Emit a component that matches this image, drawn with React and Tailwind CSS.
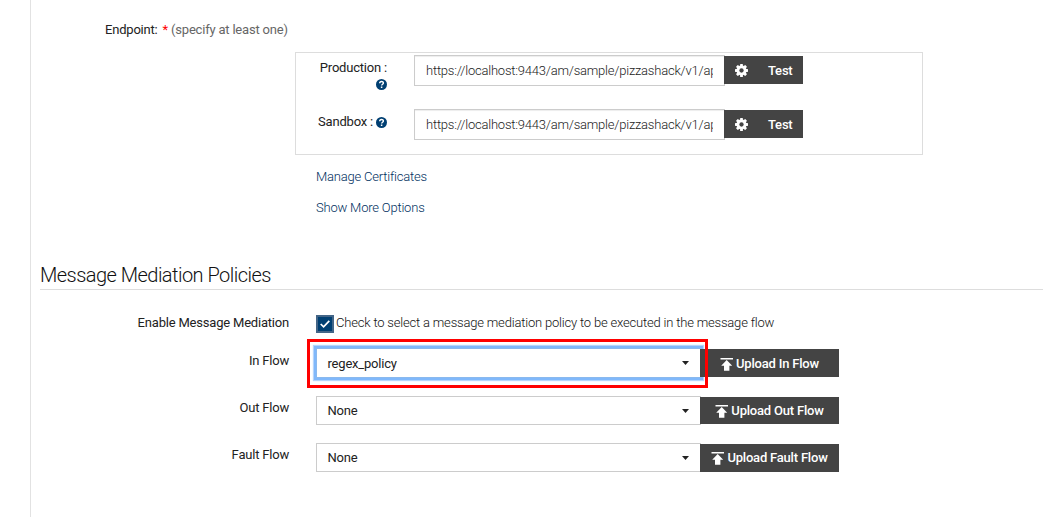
import React from "react";

function Help() {
  return (
    <svg className="size-[11px] shrink-0" viewBox="0 0 22 22">
      <circle cx="11" cy="11" r="11" fill="#003f72" />
      <path d="M7.4 8.6C7.4 3.8 14.8 4 14.8 8.2C14.8 10.6 11.2 10.6 11.2 13.2" fill="none" stroke="#fff" strokeWidth="2.8" />
      <rect x="9.7" y="15" width="3" height="3" fill="#fff" />
    </svg>
  );
}

function Gear() {
  return (
    <svg className="mt-px size-[13px] shrink-0" viewBox="0 0 24 24">
      <g fill="#fff">
        <rect x="9.4" y="0" width="5.2" height="24" rx="1" />
        <rect x="9.4" y="0" width="5.2" height="24" rx="1" transform="rotate(45 12 12)" />
        <rect x="9.4" y="0" width="5.2" height="24" rx="1" transform="rotate(90 12 12)" />
        <rect x="9.4" y="0" width="5.2" height="24" rx="1" transform="rotate(135 12 12)" />
        <circle cx="12" cy="12" r="9.2" />
      </g>
      <circle cx="12" cy="12" r="4" fill="#444" />
    </svg>
  );
}

function UploadIcon({ className }) {
  return (
    <svg className={"h-[13px] w-[13px] shrink-0 " + className} viewBox="0 0 13 13" fill="#fff">
      <path d="M0.5 0H13V1.4H0.5ZM6.7 1.9L12.2 7.7H9.4V12.8H4V7.7H1.2Z" />
    </svg>
  );
}

function EndpointRow({ name, children }) {
  return (
    <div className="flex h-[54px] items-start">
      <div className="w-[91px] shrink-0 pt-[5px] text-[13px] leading-[16px] text-[#222]">{children}</div>
      <input
        type="text"
        aria-label={name}
        defaultValue="https://localhost:9443/am/sample/pizzashack/v1/api/"
        className="ml-[27px] h-[31px] w-[311px] shrink-0 border border-[#ccc] px-[11px] text-[13px] font-light tracking-[-0.22px] text-[#222] shadow-[inset_0_1px_1px_rgba(0,0,0,0.075)]"
      />
      <button className="relative -ml-px mt-px flex h-7 w-[79px] shrink-0 items-center bg-[#444] pl-[10.5px] text-[13px] font-medium text-white">
        <Gear />
        <span className="ml-[20.5px] pt-0.5">Test</span>
      </button>
    </div>
  );
}

function Caret() {
  return (
    <svg className="h-1 w-[7px]" viewBox="0 0 7 4" fill="#222">
      <path d="M0 0H7L3.5 4Z" />
    </svg>
  );
}

function FlowRow({ label, value, action, focused, rowClass, labelClass, buttonClass, iconClass }) {
  return (
    <div className={"flex items-start " + rowClass}>
      <div className={"w-[258px] shrink-0 text-right text-[13px] leading-4 text-[#222] " + labelClass}>{label}</div>
      <div
        className={
          "ml-[27px] flex w-[385px] shrink-0 items-center justify-between border bg-white pl-[10.5px] pr-[11px] text-[13px] text-[#222] " +
          (focused
            ? "h-[30px] border-[#8ab9ee] shadow-[0_0_0_2px_#80b8fb,0_0_1px_3px_#b5d5fb]"
            : "h-[29px] border-[#ccc]")
        }
      >
        <span className={focused ? "pt-0.5" : ""}>{value}</span>
        <Caret />
      </div>
      <button className={"relative -ml-px mt-px flex w-[139px] shrink-0 items-center justify-center gap-[3px] bg-[#444] text-[13px] font-medium text-white " + buttonClass}>
        <UploadIcon className={iconClass} />
        <span className={"whitespace-nowrap " + (focused ? "pt-0.5" : "")}>{action}</span>
      </button>
    </div>
  );
}

export default function App() {
  return (
    <div className="h-[517px] w-[1043px] overflow-hidden bg-white pl-[30px] font-[Roboto,sans-serif] tracking-[-0.2px]">
      <main className="relative flex h-full flex-col border-l border-[#e2e2e2]">
        <div className="ml-[74px] mt-[22px] h-4 whitespace-nowrap text-[13px] leading-4 text-[#222]">
          Endpoint: <span className="ml-[2px] text-[#f00]">*</span>{" "}
          <span className="text-[#666]">(specify at least one)</span>
        </div>

        <section className="ml-[264px] mt-[14px] h-[103px] w-[628px] border border-[#ddd] pt-[2px]">
          <EndpointRow name="Production">
            <div className="text-right">Production :</div>
            <div className="mt-[3px] flex justify-end">
              <Help />
            </div>
          </EndpointRow>
          <EndpointRow name="Sandbox">
            <div className="flex items-center justify-end gap-[3px] whitespace-nowrap">
              Sandbox :<Help />
            </div>
          </EndpointRow>
        </section>

        <nav className="ml-[285px] mt-[14px] flex flex-col gap-[15px] text-[13px] font-light leading-4 text-[#003060]">
          <a>Manage Certificates</a>
          <a>Show More Options</a>
        </nav>

        <h2 className="ml-[9px] mt-[46px] h-[28px] border-b border-[#ddd] text-[20px] font-light leading-[27px] tracking-[-0.53px] text-[#111]">
          Message Mediation Policies
        </h2>

        <div className="mt-[25px] flex h-[18px]">
          <div className="w-[258px] text-right text-[13px] leading-4 text-[#222]">Enable Message Mediation</div>
          <div className="ml-[27px] flex size-[18px] shrink-0 items-center justify-center border-2 border-[#436587] bg-[#003f72]">
            <svg className="h-2.5 w-2.5" viewBox="0 0 10 10" fill="none" stroke="#fff" strokeWidth="1.7">
              <path d="M0.7 5L3.6 7.9L9.3 1.8" />
            </svg>
          </div>
          <label className="ml-0.5 whitespace-nowrap text-[13px] font-light leading-4 tracking-[-0.19px] text-[#111]">
            Check to select a message mediation policy to be executed in the message flow
          </label>
        </div>

        <div className="mt-[15px]">
          <FlowRow label="In Flow" value="regex_policy" action="Upload In Flow" focused rowClass="h-[48px]" labelClass="mt-[5px]" buttonClass="h-7" iconClass="mt-[3px]" />
          <FlowRow label="Out Flow" value="None" action="Upload Out Flow" rowClass="h-[47px]" labelClass="mt-1" buttonClass="h-[27px]" iconClass="mt-[2px]" />
          <FlowRow label="Fault Flow" value="None" action="Upload Fault Flow" rowClass="h-[47px]" labelClass="mt-1" buttonClass="h-7" iconClass="mt-px" />
        </div>

        <div className="absolute left-[276px] top-[339px] h-[49px] w-[401px] border-[3px] border-[#f00]" />
      </main>
    </div>
  );
}
